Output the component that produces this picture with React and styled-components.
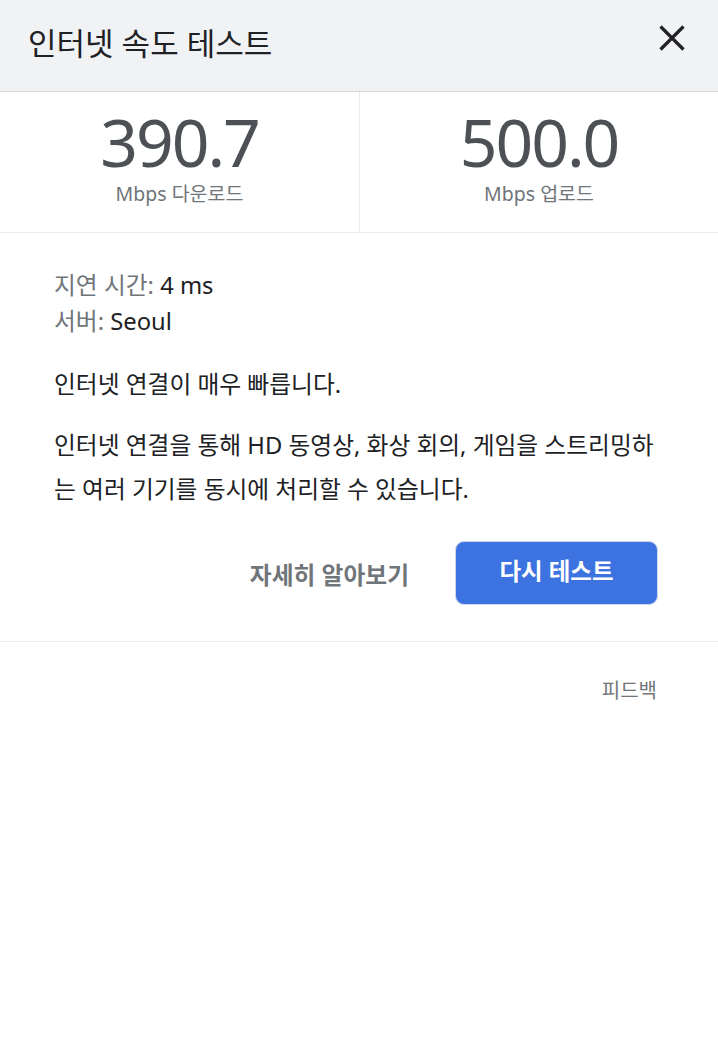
import React from 'react';
import styled, { createGlobalStyle } from 'styled-components';

const GlobalStyle = createGlobalStyle`
  html, body {
    margin: 0;
    padding: 0;
    background: #ffffff;
  }
  body {
    font-family: 'Noto Sans', 'Noto Sans CJK KR', sans-serif;
    color: #202124;
  }
`;

const Page = styled.div`
  width: 718px;
  min-height: 1062px;
  background: #fff;
`;

const Header = styled.header`
  height: 92px;
  background: #f1f2f4;
  border-bottom: 1px solid #d3d4d6;
  display: flex;
  align-items: center;
  justify-content: space-between;
  padding: 0 32px 0 28px;
  box-sizing: border-box;
`;

const Title = styled.h1`
  margin: 0;
  font-size: 31px;
  font-weight: 400;
  line-height: 40px;
  color: #202124;
  padding-bottom: 5px;
`;

const CloseButton = styled.button`
  border: none;
  background: transparent;
  padding: 0;
  width: 28px;
  height: 28px;
  display: flex;
  align-items: center;
  justify-content: center;
  cursor: pointer;
  margin-bottom: 15px;
`;

const Stats = styled.div`
  display: grid;
  grid-template-columns: 1fr 1fr;
  border-bottom: 1px solid #e8eaed;
`;

const Stat = styled.div`
  height: 140px;
  display: flex;
  flex-direction: column;
  align-items: center;
  padding-top: 14px;
  box-sizing: border-box;
  border-left: ${p => (p.$divided ? '1px solid #e8eaed' : 'none')};
`;

const StatValue = styled.div`
  font-size: 66px;
  line-height: 70px;
  letter-spacing: -2px;
  color: #4d5156;
  font-weight: 400;
`;

const StatUnit = styled.div`
  font-size: 19.5px;
  line-height: 24px;
  color: #70757a;
  margin-top: 6px;
`;

const Body = styled.section`
  padding: 34px 60px 36px 54px;
  border-bottom: 1px solid #e8eaed;
`;

const Meta = styled.div`
  font-size: 23.75px;
  line-height: 36px;
`;

const MetaLabel = styled.span`
  color: #70757a;
`;

const Text = styled.p`
  margin: ${p => p.$top || '0'} 0 0;
  font-size: 23.75px;
  line-height: 44px;
  color: #202124;
  word-break: break-all;
`;

const Actions = styled.div`
  display: flex;
  justify-content: flex-end;
  align-items: center;
  gap: 46px;
  margin-top: 30px;
`;

const LinkButton = styled.button`
  border: none;
  background: transparent;
  font-family: inherit;
  font-size: 23.75px;
  font-weight: 700;
  color: #70757a;
  padding: 0;
  cursor: pointer;
`;

const PrimaryButton = styled.button`
  width: 203px;
  height: 64px;
  border: 1px solid #cfd8ea;
  border-radius: 9px;
  background: #3c73e0;
  color: #fff;
  font-family: inherit;
  font-size: 23.5px;
  font-weight: 700;
  padding-bottom: 8px;
  cursor: pointer;
`;

const Footer = styled.div`
  display: flex;
  justify-content: flex-end;
  padding: 35px 61px 0 0;
`;

const Feedback = styled.a`
  font-size: 20px;
  line-height: 28px;
  color: #70757a;
  text-decoration: none;
`;

export default function App() {
  return (
    <Page>
      <GlobalStyle />
      <Header>
        <Title>인터넷 속도 테스트</Title>
        <CloseButton aria-label="닫기">
          <svg width="26" height="26" viewBox="0 0 26 26">
            <path d="M1.5 1.5 L24.5 24.5 M24.5 1.5 L1.5 24.5" stroke="#202124" strokeWidth="3.2" />
          </svg>
        </CloseButton>
      </Header>

      <Stats>
        <Stat>
          <StatValue>390.7</StatValue>
          <StatUnit>Mbps 다운로드</StatUnit>
        </Stat>
        <Stat $divided>
          <StatValue>500.0</StatValue>
          <StatUnit>Mbps 업로드</StatUnit>
        </Stat>
      </Stats>

      <Body>
        <Meta>
          <MetaLabel>지연 시간:</MetaLabel> 4 ms
        </Meta>
        <Meta>
          <MetaLabel>서버:</MetaLabel> Seoul
        </Meta>
        <Text $top="23px">인터넷 연결이 매우 빠릅니다.</Text>
        <Text $top="17px">
          인터넷 연결을 통해 HD 동영상, 화상 회의, 게임을 스트리밍하는 여러 기기를 동시에 처리할 수 있습니다.
        </Text>
        <Actions>
          <LinkButton>자세히 알아보기</LinkButton>
          <PrimaryButton>다시 테스트</PrimaryButton>
        </Actions>
      </Body>

      <Footer>
        <Feedback href="#">피드백</Feedback>
      </Footer>
    </Page>
  );
}
